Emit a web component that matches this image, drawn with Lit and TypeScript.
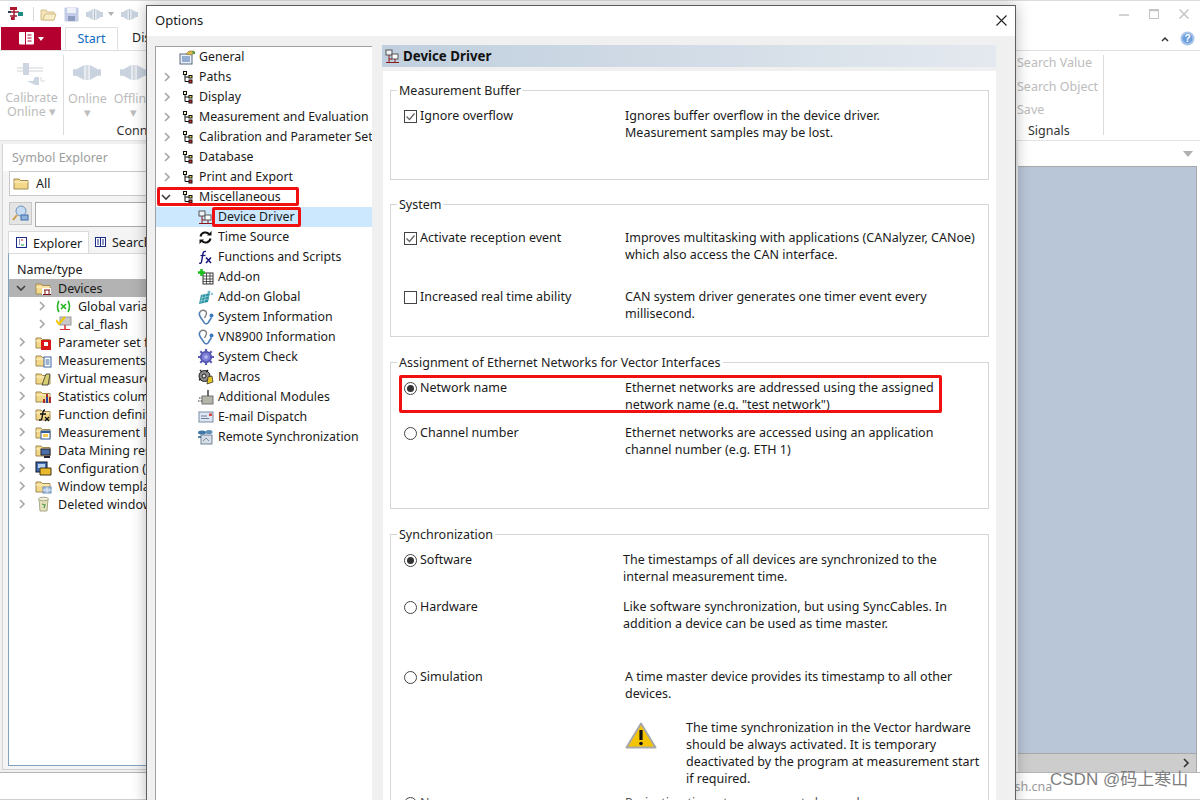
import { LitElement, html, css, svg } from "lit";
import { customElement } from "lit/decorators.js";

const ic = (w: number, h: number, body: unknown, cls = "") =>
  html`<svg class="ic ${cls}" width=${w} height=${h} viewBox="0 0 ${w} ${h}">${body}</svg>`;

const chevR = html`<svg class="chev" width="8" height="10" viewBox="0 0 8 10"><path d="M2 1l4 4-4 4" fill="none" stroke="#a6a6a6" stroke-width="1.6"/></svg>`;
const chevD = html`<svg class="chev" width="10" height="8" viewBox="0 0 10 8"><path d="M1 2l4 4 4-4" fill="none" stroke="#404040" stroke-width="1.6"/></svg>`;

const treeNode = ic(11, 13, svg`
  <path d="M3 2v8.500h4M3 6h4" fill="none" stroke="#111" stroke-width="1"/>
  <rect x="1.500" y="0.500" width="3" height="3" fill="#f6f6d0" stroke="#111"/>
  <rect x="7" y="4.500" width="3" height="2.500" fill="#e8e04a" stroke="#111"/>
  <rect x="7" y="9" width="3" height="3" fill="#e03030" stroke="#111"/>`);

const general = ic(17, 15, svg`
  <rect x="1" y="4" width="12" height="10" fill="#eaf0f8" stroke="#5a6a80"/>
  <path d="M3 7h8M3 9h8M3 11h8" stroke="#3d6da8"/>
  <path d="M7 4l3-3h5l1 2-4 2z" fill="#d9b64a" stroke="#8a7a30" stroke-width=".6"/>
  <path d="M13 1l3 1v2l-2 0z" fill="#4c9a4c"/>`);

const deviceDriver = ic(15, 15, svg`
  <rect x="1" y="1" width="6" height="5" fill="#eef2f7" stroke="#555"/>
  <rect x="7" y="5" width="6" height="5" fill="#fff" stroke="#555"/>
  <path d="M4 6v4h3M1 13.500h13M4 10v3.500M10 10v3.500" fill="none" stroke="#8c1c1c"/>`);

const timeSource = ic(15, 15, svg`
  <path d="M2.500 6.500a5 5 0 0 1 8.800-2.200" fill="none" stroke="#111" stroke-width="2"/>
  <path d="M9 5.500h4.500V1z" fill="#111"/>
  <path d="M12.500 8.500a5 5 0 0 1-8.800 2.200" fill="none" stroke="#111" stroke-width="2"/>
  <path d="M6 9.500H1.500V14z" fill="#111"/>`);

const fx = ic(15, 15, svg`
  <path d="M8 1.500c-2-.6-2.800.6-3.100 2.500L3.700 11c-.3 1.800-1 2.600-2.500 2.200" fill="none" stroke="#14147a" stroke-width="1.400"/>
  <path d="M2.500 5.500h5" stroke="#14147a" stroke-width="1.200"/>
  <path d="M8 7.500l5 5.500M13 7.500l-5 5.500" stroke="#14147a" stroke-width="1.500"/>`);

const addOn = ic(16, 16, svg`
  <rect x="5" y="4" width="10" height="11" fill="#fff" stroke="#333"/>
  <path d="M5 7h10M5 10h10M5 12.500h10M8.500 4v11M12 4v11" stroke="#333" stroke-width=".8"/>
  <path d="M3.500 0v7M0 3.500h7" stroke="#16c016" stroke-width="2.400"/>`);

const addOnGlobal = ic(16, 16, svg`
  <path d="M1 15l2-9 9-2-2 9z" fill="#2a8f9e"/>
  <path d="M3 9l8-2M2 12l8-2M5 5l-2 9M8 5l-2 9" stroke="#9fdbe2" stroke-width=".7"/>
  <circle cx="11" cy="3" r="1.500" fill="#6fb6c6"/><circle cx="14" cy="5" r="1.200" fill="#86c6d2"/>`);

const steth = ic(16, 16, svg`
  <path d="M2 3C0.500 5 1.500 7 3 9l3.500 5c1 1 2.500 1 3.500 0l3.500-5.500" fill="none" stroke="#4f7fb8" stroke-width="1.600"/>
  <path d="M2 3c1-1.500 3-2 4.500-1.500C8.500 2.500 9 4 8 6L6.500 9" fill="none" stroke="#7f7f7f" stroke-width="1.400"/>
  <circle cx="13.500" cy="6.500" r="2" fill="#3a78c0"/>`);

const gear = ic(16, 16, svg`
  <circle cx="8" cy="8" r="5.500" fill="#6a6ac8" stroke="#3d3d90"/>
  <path d="M8 0v16M0 8h16M2.300 2.300l11.400 11.400M13.700 2.300L2.300 13.700" stroke="#5858b8" stroke-width="2.200"/>
  <circle cx="8" cy="8" r="4" fill="#8080d8"/><circle cx="8" cy="8" r="1.800" fill="#b9b9ee"/>`);

const macros = ic(16, 16, svg`
  <circle cx="6.500" cy="7" r="5.500" fill="#8a8a8a" stroke="#222"/>
  <circle cx="6" cy="7" r="2" fill="#ddd" stroke="#222"/>
  <path d="M2 1l2 2M10 1L8 3M1 11l2-1" stroke="#222" stroke-width="1.400"/>
  <path d="M9 15l1-7 4-1 1 6z" fill="#e8c628" stroke="#222" stroke-width=".7"/>`);

const modules = ic(16, 16, svg`
  <rect x="4" y="7" width="11" height="8" fill="#b4b4a8" stroke="#777"/>
  <path d="M10 1v6" stroke="#333" stroke-width="1.400"/>
  <path d="M1 9h3M0 12h4" stroke="#333" stroke-dasharray="1.500 1"/>`);

const email = ic(16, 14, svg`
  <rect x="1" y="2" width="14" height="10" fill="#dde6f2" stroke="#7a8ca6"/>
  <rect x="11" y="3.500" width="3" height="2.500" fill="#d8473a"/>
  <path d="M3 6h6M3 8.500h8" stroke="#6d7f98"/>`);

const remote = ic(17, 16, svg`
  <rect x="4" y="6" width="11" height="9" fill="#d6dde4" stroke="#6f8499"/>
  <path d="M6 12l3-3 3 3" fill="none" stroke="#7d93a8"/>
  <ellipse cx="5" cy="3.500" rx="4" ry="2" fill="#3f78a8"/>
  <ellipse cx="12" cy="3" rx="3.500" ry="2" fill="#5d8fb8"/>
  <path d="M1 8h3" stroke="#26567c" stroke-width="1.500"/>`);

const folder = (o: unknown = "") => ic(17, 15, svg`
  <path d="M1 3h5l1.500 1.500H15V13H1z" fill="#f4d88a" stroke="#a08a50"/>
  <path d="M1 6h14" stroke="#fff3c8"/>${o}`);

const leftRows = [
  ["Parameter set file", folder(svg`<rect x="6" y="5" width="10" height="10" fill="#d81818"/><rect x="9" y="7" width="4" height="4" fill="#fff"/>`)],
  ["Measurements", folder(svg`<rect x="9" y="4" width="7" height="10" fill="#fff" stroke="#3c64a4"/><path d="M10.500 7h4M10.500 9h4M10.500 11h4" stroke="#3c64a4"/>`)],
  ["Virtual measurements", folder(svg`<path d="M7 14l4-11h4l-2 11z" fill="#d8d070" stroke="#333" stroke-width=".8"/>`)],
  ["Statistics columns", folder(svg`<path d="M9 14v-4M12 14V5M15 14V8" stroke="#b02828" stroke-width="2"/><path d="M12 14V8" stroke="#2848a0" stroke-width="2"/>`)],
  ["Function definitions", folder(svg`<path d="M10 3C7 3 8 8 7 11c-.3 1.500-1 2.500-3 2M5 7h6M10 10l4 4M14 10l-4 4" fill="none" stroke="#111" stroke-width="1.300"/>`)],
  ["Measurement lists", folder(svg`<rect x="6" y="6" width="9" height="8" fill="#fff" stroke="#335c98"/><rect x="6" y="6" width="9" height="2" fill="#335c98"/><rect x="8" y="9" width="5" height="3" fill="#f4cf52"/>`)],
  ["Data Mining results", folder(svg`<rect x="6" y="6" width="9" height="6" fill="#4a6fa8" stroke="#223"/><path d="M9 14h6" stroke="#223" stroke-width="2"/>`)],
  ["Configuration (cal)", ic(17, 15, svg`<rect x="1" y="1" width="11" height="10" fill="#3f6fb0" stroke="#112"/><rect x="3" y="3" width="7" height="4" fill="#b6d2ee"/><path d="M5 7h11v7H5z" fill="#e8b92c" stroke="#443310"/>`)],
  ["Window templates", folder(svg`<rect x="8" y="8" width="8" height="6" fill="#a8c0de" stroke="#6f8fb8"/><path d="M12 8v6M8 11h8" stroke="#e0ebf5"/>`)],
  ["Deleted windows", ic(17, 16, svg`<path d="M4 3h9l-1 12H5z" fill="#e4e0b8" stroke="#a8a88a"/><ellipse cx="8.500" cy="3" rx="5" ry="1.800" fill="#f2efd8" stroke="#a8a88a"/><path d="M7 8l3 1-1 3" fill="none" stroke="#4c9a4c" stroke-width="1.200"/>`)],
];

const treeTop = ["Paths", "Display", "Measurement and Evaluation", "Calibration and Parameter Set", "Database", "Print and Export"];
const treeSub: [string, unknown][] = [
  ["Time Source", timeSource], ["Functions and Scripts", fx], ["Add-on", addOn], ["Add-on Global", addOnGlobal],
  ["System Information", steth], ["VN8900 Information", steth], ["System Check", gear], ["Macros", macros],
  ["Additional Modules", modules], ["E-mail Dispatch", email], ["Remote Synchronization", remote],
];

type Row = { type: "check" | "radio"; on?: boolean; label: string; text: string[]; h: number; near?: boolean; mark?: boolean };
type Group = { title: string; h: number; mb: number; first?: number; rows: Row[] };
const groups: Group[] = [
  { title: "Measurement Buffer", h: 90, mb: 24, rows: [
    { type: "check", on: true, label: "Ignore overflow", text: ["Ignores buffer overflow in the device driver.", "Measurement samples may be lost."], h: 60 },
  ]},
  { title: "System", h: 133, mb: 25, first: 8, rows: [
    { type: "check", on: true, label: "Activate reception event", text: ["Improves multitasking with applications (CANalyzer, CANoe)", "which also access the CAN interface."], h: 59 },
    { type: "check", label: "Increased real time ability", text: ["CAN system driver generates one timer event every", "millisecond."], h: 40 },
  ]},
  { title: "Assignment of Ethernet Networks for Vector Interfaces", h: 147, mb: 25, rows: [
    { type: "radio", on: true, mark: true, label: "Network name", text: ["Ethernet networks are addressed using the assigned", 'network name (e.g. "test network")'], h: 45 },
    { type: "radio", label: "Channel number", text: ["Ethernet networks are accessed using an application", "channel number (e.g. ETH 1)"], h: 50 },
  ]},
];
const syncRows: Row[] = [
  { type: "radio", on: true, near: true, label: "Software", text: ["The timestamps of all devices are synchronized to the", "internal measurement time."], h: 47 },
  { type: "radio", near: true, label: "Hardware", text: ["Like software synchronization, but using SyncCables. In", "addition a device can be used as time master."], h: 70 },
  { type: "radio", label: "Simulation", text: ["A time master device provides its timestamp to all other", "devices."], h: 51 },
];

@customElement("app-root")
export class AppRoot extends LitElement {
  static styles = css`
    :host { display: block; width: 1200px; height: 800px; position: relative; overflow: hidden; background: #fff;
      font-family: "Noto Sans", "Liberation Sans", sans-serif; font-size: 12.5px; color: #1a1a1a; }
    svg { display: block; flex: none; }
    .app { width: 1200px; height: 800px; display: flex; flex-direction: column; border-top: 1px solid #dcdcdc; box-sizing: border-box; }
    .titlebar { height: 26px; display: flex; align-items: center; padding-left: 7px; flex: none; }
    .tb-sep { width: 1px; height: 14px; background: #d8d8d8; margin: 0 6px 0 10px; }
    .tb-gap { margin-right: 7px; }
    .tarrow { width: 0; height: 0; border: 3px solid transparent; border-top: 4px solid #b0b0b0; border-bottom: 0; margin: 0 7px 0 5px; }
    .winbtns { margin-left: auto; display: flex; gap: 20px; padding-right: 11px; align-items: center; }
    .tabs { height: 23px; display: flex; flex: none; border-bottom: 1px solid #dfdfdf; padding-left: 1px; }
    .filebtn { width: 60px; height: 23px; background: #b4002f; display: flex; align-items: center; justify-content: center; gap: 3px; }
    .darrow { width: 0; height: 0; border: 3px solid transparent; border-top: 4px solid #fff; border-bottom: 0; }
    .tab { margin-left: 4px; width: 53px; height: 23px; box-sizing: border-box; border: 1px solid #dfdfdf; border-bottom: 1px solid #fff; text-align: center; line-height: 22px; color: #0e6cc0; }
    .tab2 { padding-left: 14px; line-height: 22px; }
    .tab-right { margin-left: auto; display: flex; align-items: center; gap: 11px; padding-right: 5px; }
    .ribbon { height: 89px; flex: none; border-bottom: 1px solid #e2e2e2; display: flex; color: #bcbcbc; line-height: 14px; }
    .rsep { width: 1px; background: #dcdcdc; margin: 4px 0 5px; }
    .rcmd { display: flex; flex-direction: column; align-items: center; padding-top: 12px; text-align: center; }
    .rcmd svg { margin-bottom: 6px; }
    .g1 { width: 63px; display: flex; justify-content: center; }
    .g2 { width: 172px; display: flex; flex-direction: column; }
    .g2cmds { display: flex; height: 72px; padding-left: 4px; gap: 7px; }
    .g2 .rcmd { padding-top: 14px; }
    .g2 .rcmd svg { margin-bottom: 3px; }
    .g2 .rcmd div { margin-top: 9px; }
    .rconn { text-align: center; color: #333; line-height: 16px; }
    .rright { margin-left: auto; display: flex; }
    .rsearch { width: 86px; padding-top: 4px; display: flex; flex-direction: column; }
    .rsearch div { height: 23.600px; flex: none; line-height: 16px; }
    .rsearch .sig { color: #333; padding: 0 0 0 11px; margin-top: -3px; }
    .rblank { width: 96px; border-left: 1px solid #dcdcdc; margin: 4px 0 5px; }
    .work { flex: 1; display: flex; min-height: 0; background: #f0f0f0; padding-left: 2px; }
    .left { width: 144px; background: #f4f4f4; border-left: 1px solid #d4d4d4; border-bottom: 1px solid #d0d0d0; display: flex; flex-direction: column; padding-left: 5px; margin: 3px 0 2px; }
    .lhead { height: 27px; line-height: 27px; color: #9d9d9d; padding-left: 4px; margin-left: -5px; background: #fff; flex: none; text-indent: 5px; }
    .combo { height: 23px; background: #fff; border: 1px solid #c8c8c8; border-right: 0; display: flex; align-items: center; gap: 6px; padding-left: 3px; margin: 0 0 0 1px; flex: none; }
    .srow { display: flex; gap: 3px; margin: 6px 0 0 1px; height: 25px; flex: none; }
    .sbtn { width: 23px; height: 23px; background: #e4e4e4; border: 1px solid #c8c8c8; box-sizing: border-box; display: flex; align-items: center; justify-content: center; }
    .sinput { flex: 1; background: #fff; border: 1px solid #aaa; border-right: 0; height: 23px; }
    .ltabs { display: flex; margin-top: 4px; height: 23px; flex: none; }
    .ltab { display: flex; align-items: center; gap: 5px; background: #fff; padding: 0 0 0 7px; width: 81px; box-sizing: border-box; border: 1px solid #dadada; border-bottom: 0; }
    .ltab2 { border: 0; background: transparent; border-bottom: 1px solid #dadada; flex: 1; padding-left: 6px; overflow: hidden; white-space: nowrap; }
    .ltree { flex: 1; background: #fff; border-left: 1px solid #7fa2c2; border-top: 1px solid #dadada; margin-top: -1px; border-bottom: 1px solid #7fa2c2; margin-bottom: 3px; }
    .lname { height: 25px; line-height: 32px; padding-left: 8px; }
    .lrow { height: 18px; display: flex; align-items: center; white-space: nowrap; overflow: hidden; }
    .lrow.sel { background: #b3b3b3; }
    .lrow .slot { width: 26px; display: flex; justify-content: flex-end; padding-right: 9px; box-sizing: border-box; flex: none; }
    .lrow .lbl { margin-left: 6px; }
    .lrow.sub .slot { width: 47px; padding-right: 10px; }
    .lrow.sub .lbl { margin-left: 7px; }
    .lrow.sub .lbl.cal { margin-left: 6px; }
    .right { margin-left: auto; width: 182px; display: flex; flex-direction: column; background: #fff; }
    .rhead { height: 25px; display: flex; justify-content: flex-end; align-items: center; padding-right: 7px; flex: none; }
    .rtri { width: 0; height: 0; border: 5px solid transparent; border-top: 6px solid #b0b0b0; border-bottom: 0; }
    .rbody { flex: 1; background: #b9c6d7; border: 1px solid #a8a8a8; border-left: 0; margin-right: 3px; }
    .rscroll { height: 18px; margin-right: 3px; background: #cdcdcd; border-right: 1px solid #a8a8a8; display: flex; justify-content: flex-end; align-items: center; padding-right: 6px; flex: none; }
    .statusbar { height: 28px; flex: none; background: #fff; border-top: 1px solid #b4b4b4; border-bottom: 1px solid #d0d0d0; box-sizing: border-box; position: relative; }
    .statustext { color: #9a9a9a; position: absolute; left: 1000px; top: 5px; white-space: nowrap; }
    .watermark { position: absolute; left: 1050px; top: 769px; font-size: 17px; line-height: 22px; color: #7e7e7e; white-space: nowrap;
      font-family: "Liberation Sans", "Noto Sans CJK SC", sans-serif; }

    .dialog { position: absolute; left: 146px; top: 5px; width: 870px; height: 800px; box-sizing: border-box; background: #f0f0f0;
      border: 1px solid #5e5e5e; box-shadow: 0 0 14px rgba(0,0,0,.28); display: flex; flex-direction: column; }
    .dtitle { height: 30px; background: #fff; display: flex; align-items: center; justify-content: space-between; padding: 0 8px 2px 8px; box-sizing: border-box; flex: none; font-size: 13px; }
    .dbody { flex: 1; display: flex; min-height: 0; padding-top: 9px; }
    .tree { margin-left: 8px; width: 217px; box-sizing: border-box; background: #fff; border: 1px solid #a0a0a0; border-right: 0; border-bottom: 0; margin-top: 1px; overflow: hidden; font-size: 12.300px; }
    .trow { height: 20px; display: flex; align-items: center; white-space: nowrap; position: relative; }
    .trow span.t { margin-top: -2px; }
    .trow .slot { width: 20px; display: flex; justify-content: flex-end; padding-right: 5px; box-sizing: border-box; flex: none; }
    .trow .tic { width: 23px; display: flex; justify-content: center; flex: none; }
    .trow.sub { padding-left: 42px; gap: 5px; }
    .trow.sub .wrap { width: 15px; display: flex; justify-content: center; flex: none; }
    .trow.sel { background: #cce8ff; }
    .mark { position: absolute; border: 3px solid #f01010; border-radius: 2px; box-sizing: border-box; pointer-events: none; }
    .m-misc { left: 1px; top: 0; width: 142px; height: 19px; }
    .m-dev { left: 56px; top: 0; width: 89px; height: 20px; }
    .m-net { left: 8px; top: -4px; width: 543px; height: 38px; }
    .pane { margin-left: 10px; width: 614px; flex: none; }
    .phead { height: 22px; background: linear-gradient(90deg, #c0cfde, #e4e9ef); display: flex; align-items: center; gap: 3px; padding-left: 3px; font-weight: 700; font-size: 13.300px; color: #111; }
    .pcontent { background: #fff; height: 740px; margin: 4px 0 0 1px; padding: 19px 7px 0 7px; overflow: hidden; box-sizing: border-box; }
    .group { border: 1px solid #d6d6d6; box-sizing: border-box; }
    .legend { margin: -9px 0 0 6px; padding: 0 2px; background: #fff; width: fit-content; line-height: 17px; height: 17px; color: #222; }
    .rows { padding-top: 8px; }
    .row { display: grid; grid-template-columns: 16px 205px 1fr; padding-left: 13px; line-height: 17px; position: relative; box-sizing: border-box; }
    .row.near { grid-template-columns: 16px 203px 1fr; }
    .ctl { margin-top: 3px; }
    .warn { display: grid; grid-template-columns: 61px 1fr; padding-left: 234px; line-height: 17px; height: 75px; }
    .warn svg { margin-top: 3px; }
    .cut { color: #555; }
  `;

  private control(r: Row) {
    if (r.type === "check")
      return html`<svg class="ctl" width="13" height="13" viewBox="0 0 13 13"><rect x=".5" y=".5" width="12" height="12" fill="#fff" stroke="#444"/>${r.on ? svg`<path d="M2.500 6.500l3 3 5-6" fill="none" stroke="#666" stroke-width="1.300"/>` : ""}</svg>`;
    return html`<svg class="ctl" width="13" height="13" viewBox="0 0 13 13"><circle cx="6.500" cy="6.500" r="6" fill="#fff" stroke="#444"/>${r.on ? svg`<circle cx="6.500" cy="6.500" r="3.500" fill="#333"/>` : ""}</svg>`;
  }

  private row(r: Row) {
    return html`<div class="row ${r.near ? "near" : ""}" style="height:${r.h}px">
      ${this.control(r)}<div>${r.label}</div><div>${r.text.map((t) => html`${t}<br />`)}</div>
      ${r.mark ? html`<div class="mark m-net"></div>` : ""}
    </div>`;
  }

  private connector(w: number, h: number) {
    const m = w / 2;
    const l = w * 0.12, p = w * 0.4, e = h * 0.28;
    return ic(w, h, svg`
      <path d="M0 ${e}H${l}L${p} 0V${h}L${l} ${h - e}H0z" fill="#c9d3df"/>
      <path d="M${w} ${e}H${w - l}L${w - p} 0V${h}L${w - l} ${h - e}H${w}z" fill="#c9d3df"/>
      <rect x=${p} y="0" width=${m - p - 0.6} height=${h} fill="#e6eaef"/>
      <rect x=${m + 0.6} y="0" width=${m - p - 0.6} height=${h} fill="#e6eaef"/>
      <path d="M${m} 0V${h}" stroke="#b4bfcc" stroke-width="1"/>`);
  }

  render() {
    return html`
      <div class="app">
        <div class="titlebar">
          ${ic(16, 14, svg`<path d="M1 5h11M7 1v12M3 9h7" stroke="#a01c30" stroke-width="1.500" fill="none"/><rect x="3" y="0" width="7" height="3" fill="#b01830"/><rect x="11" y="5" width="5" height="4" fill="#1e8a80"/><rect x="4" y="10" width="3" height="3" fill="#b01830"/><rect x="1" y="4" width="3" height="2" fill="#304050"/>`)}
          <div class="tb-sep"></div>
          ${ic(17, 15, svg`<path d="M1 3h5l1 2h7v8H1z" fill="#f4e3b8" stroke="#d4c08a"/><path d="M3 13l2-6h11l-2 6z" fill="#f9edc9" stroke="#d4c08a"/>`, "tb-gap")}
          ${ic(15, 15, svg`<rect x=".5" y=".5" width="14" height="14" rx="1" fill="#c3cce6"/><rect x="3" y="1" width="9" height="5" fill="#eef1f8"/><rect x="4" y="9" width="7" height="5" fill="#8e9cc0"/>`, "tb-gap")}
          ${this.connector(17, 11)}<div class="tarrow"></div>
          ${this.connector(17, 11)}
          <div class="winbtns">
            ${ic(10, 10, svg`<path d="M0 6h10" stroke="#c4c4c4" stroke-width="1.500"/>`)}
            ${ic(10, 10, svg`<rect x=".5" y=".5" width="9" height="9" fill="none" stroke="#c4c4c4"/><path d="M0 1.500h10" stroke="#c4c4c4" stroke-width="1.500"/>`)}
            ${ic(10, 10, svg`<path d="M.5.5l9 9M9.500.5l-9 9" stroke="#c4c4c4" stroke-width="1.500"/>`)}
          </div>
        </div>
        <div class="tabs">
          <div class="filebtn">
            ${ic(16, 13, svg`<rect x="0" y="0" width="15" height="12.500" rx="1" fill="#fff"/><path d="M6.500 0v13" stroke="#b4002f"/><path d="M8.500 3h4M8.500 6h4M8.500 9h4" stroke="#b4002f"/>`)}
            <div class="darrow"></div>
          </div>
          <div class="tab">Start</div>
          <div class="tab2">Display</div>
          <div class="tab-right">
            ${ic(8, 6, svg`<path d="M1 5l3-3 3 3" fill="none" stroke="#333" stroke-width="1.500"/>`)}
            <svg width="15" height="15" viewBox="0 0 15 15"><circle cx="7.500" cy="7.500" r="7" fill="#a9c5ea"/><circle cx="7.500" cy="7.500" r="5" fill="#6f9fdb"/><text x="7.500" y="11" text-anchor="middle" font-size="10" font-weight="700" fill="#fff" font-family="Liberation Sans">?</text></svg>
          </div>
        </div>
        <div class="ribbon">
          <div class="g1">
            <div class="rcmd">
              ${ic(29, 22, svg`<path d="M0 5h26M0 8h26" stroke="#cfd3d8"/><rect x="6" y="0" width="6" height="12" fill="#cdd6e0"/><path d="M10 18h6l2-4h4v8h-4z" fill="#ccd6e0"/><path d="M28 18h-4v-4" stroke="#d5dbe2" fill="none"/>`)}
              <div>Calibrate<br />Online <span>▾</span></div>
            </div>
          </div>
          <div class="rsep"></div>
          <div class="g2">
            <div class="g2cmds">
              <div class="rcmd">${this.connector(28, 15)}<div>Online<br />▾</div></div>
              <div class="rcmd">${this.connector(28, 15)}<div>Offline<br />▾</div></div>
            </div>
            <div class="rconn">Connection</div>
          </div>
          <div class="rright">
            <div class="rsearch">
              <div>Search Value</div><div>Search Object</div><div>Save</div><div class="sig">Signals</div>
            </div>
            <div class="rblank"></div>
          </div>
        </div>
        <div class="work">
          <div class="left">
            <div class="lhead">Symbol Explorer</div>
            <div class="combo">${folder()}<span>All</span></div>
            <div class="srow">
              <div class="sbtn">${ic(17, 17, svg`<circle cx="9" cy="6" r="5" fill="#c6dcf2" stroke="#6f93bd"/><path d="M5 10l-4 5" stroke="#c99a42" stroke-width="2"/><rect x="9" y="10" width="7" height="5" fill="#8fb1dc" stroke="#3f6fae"/>`)}</div>
              <div class="sinput"></div>
            </div>
            <div class="ltabs">
              <div class="ltab">${ic(12, 12, svg`<rect x=".5" y=".5" width="10" height="10" fill="#fff" stroke="#1a2a8a"/><path d="M3 3h1M3 5h1M3 7h1" stroke="#1a2a8a"/><path d="M5 8h3" stroke="#18a040"/><path d="M5 3h2" stroke="#d02020"/>`)}Explorer</div>
              <div class="ltab ltab2">${ic(12, 12, svg`<rect x=".5" y="1.500" width="10" height="9" fill="#fff" stroke="#1a2a8a"/><path d="M5.500 1.500v9M2 4h2M2 6h2M2 8h2M7 4h2M7 6h2M7 8h2" stroke="#1a2a8a"/>`)}Search</div>
            </div>
            <div class="ltree">
              <div class="lname">Name/type</div>
              <div class="lrow sel"><span class="slot">${chevD}</span>${folder(svg`<rect x="7" y="7" width="9" height="7" fill="#fff"/><path d="M8 13.500h8M10 9v4M14 9v4M9 9h6" stroke="#7a1414"/>`)}<span class="lbl">Devices</span></div>
              <div class="lrow sub"><span class="slot">${chevR}</span><svg width="15" height="15" viewBox="0 0 15 15"><path d="M3 2C1 5 1 10 3 13M12 2c2 3 2 8 0 11" fill="none" stroke="#22b322" stroke-width="1.600"/><path d="M5 5l5 5M10 5l-5 5" stroke="#22b322" stroke-width="1.600"/></svg><span class="lbl">Global variables</span></div>
              <div class="lrow sub"><span class="slot">${chevR}</span>${ic(16, 16, svg`<rect x="4" y="1" width="11" height="8" fill="#c8c8c8" stroke="#999"/><path d="M9 9v4" stroke="#d83030" stroke-width="1.500"/><path d="M4 13.500h10" stroke="#d83030"/><path d="M0 4l3 4 6-7" fill="none" stroke="#f0c800" stroke-width="2"/>`)}<span class="lbl cal">cal_flash</span></div>
              ${leftRows.map((r) => html`<div class="lrow"><span class="slot">${chevR}</span>${r[1]}<span class="lbl">${r[0]}</span></div>`)}
            </div>
          </div>
          <div class="right">
            <div class="rhead"><div class="rtri"></div></div>
            <div class="rbody"></div>
            <div class="rscroll">${ic(8, 10, svg`<path d="M2 1l4 4-4 4" fill="none" stroke="#333" stroke-width="1.600"/>`)}</div>
          </div>
        </div>
        <div class="statusbar"><span class="statustext">flash.cna</span></div>
      </div>

      <div class="dialog">
        <div class="dtitle"><span>Options</span>${ic(11, 11, svg`<path d="M.5.5l10 10M10.500.5l-10 10" stroke="#222" stroke-width="1.100"/>`)}</div>
        <div class="dbody">
          <div class="tree">
            <div class="trow top"><span class="slot"></span><span class="tic">${general}</span><span class="t">General</span></div>
            ${treeTop.map((t) => html`<div class="trow top"><span class="slot">${chevR}</span><span class="tic">${treeNode}</span><span class="t">${t}</span></div>`)}
            <div class="trow top"><span class="slot">${chevD}</span><span class="tic">${treeNode}</span><span class="t">Miscellaneous</span><div class="mark m-misc"></div></div>
            <div class="trow sub sel"><span class="wrap">${deviceDriver}</span><span class="t">Device Driver</span><div class="mark m-dev"></div></div>
            ${treeSub.map((r) => html`<div class="trow sub"><span class="wrap">${r[1]}</span><span class="t">${r[0]}</span></div>`)}
          </div>
          <div class="pane">
            <div class="phead">${deviceDriver}<span>Device Driver</span></div>
            <div class="pcontent">
              ${groups.map((g) => html`<div class="group" style="height:${g.h}px;margin-bottom:${g.mb}px"><div class="legend">${g.title}</div><div class="rows" style="padding-top:${8 + (g.first ?? 0)}px">${g.rows.map((r) => this.row(r))}</div></div>`)}
              <div class="group" style="height:400px">
                <div class="legend">Synchronization</div>
                <div class="rows">
                  ${syncRows.map((r) => this.row(r))}
                  <div class="warn">
                    ${ic(32, 27, svg`<path d="M16 1.500L30.500 25.500H1.500z" fill="#f5c400" stroke="#a8a8a8" stroke-width="2" stroke-linejoin="round"/><path d="M16 8v10" stroke="#111" stroke-width="3.200"/><circle cx="16" cy="21.500" r="1.800" fill="#111"/>`)}
                    <div>The time synchronization in the Vector hardware<br />should be always activated. It is temporary<br />deactivated by the program at measurement start<br />if required.</div>
                  </div>
                  <div class="row" style="height:20px">${this.control({ type: "radio", label: "", text: [], h: 0 })}<div class="cut">None</div><div class="cut">Projection time stamps are not changed</div></div>
                </div>
              </div>
            </div>
          </div>
        </div>
      </div>
      <div class="watermark">CSDN @码上寒山</div>
    `;
  }
}
